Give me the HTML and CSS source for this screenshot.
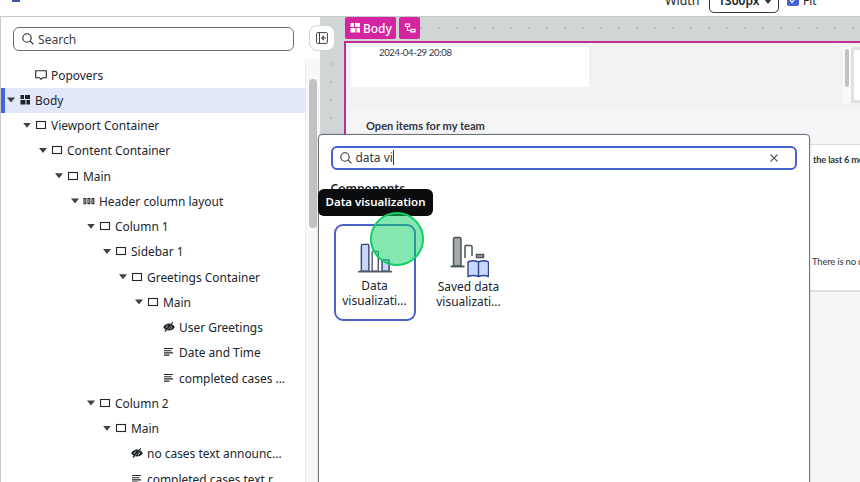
FILE: index.html
```html
<!DOCTYPE html>
<html lang="en">
<head>
<meta charset="utf-8">
<title>UI Builder</title>
<link rel="stylesheet" href="styles.css">
</head>
<body>
<svg class="defs" width="0" height="0">
  <symbol id="box" viewBox="0 0 12 10"><rect x="1.5" y="1.5" width="9" height="7" fill="none" stroke="currentColor" stroke-width="1.1"/></symbol>
  <symbol id="body" viewBox="0 0 12 10"><path d="M1.500 0H5v4H1.500zM6 0h5v4H6zM1.500 5h5v4.500h-5zM7.500 5H11v4.500H7.500z" fill="currentColor"/></symbol>
  <symbol id="pop" viewBox="0 0 12 10"><path d="M.7.7h10.600v7H7.700L6 9.200 4.300 7.700H.7z" fill="none" stroke="currentColor" stroke-width="1.1"/></symbol>
  <symbol id="cols" viewBox="0 0 12 10"><path d="M1 2.500h1.800v5.200H1zM5 2.500h1.800v5.200H5zM9 2.500h1.800v5.200H9z" fill="none" stroke="currentColor" stroke-width="1.100"/></symbol>
  <symbol id="text" viewBox="0 0 12 10"><path d="M1 1.500h9M1 3.700h7.500M1 5.900h9M1 8.100h5.500" stroke="currentColor" stroke-width="1.100"/></symbol>
  <symbol id="hid" viewBox="0 0 12 10"><path d="M.2 5.200Q2.500 1.500 6 1.500T11.800 5.200Q9.500 8.500 6 8.500T.2 5.200z" fill="currentColor"/><path d="M3.200 8.800 9.500 1.200" stroke="#fff" stroke-width="1"/><path d="M2 9.500 9.800.4" stroke="currentColor" stroke-width="1.200"/><path d="M3.500 6q-.3-2 1.500-2.500M8.500 4.500q.2 2-1.500 2.500" stroke="#fff" stroke-width=".6" fill="none"/></symbol>
  <symbol id="glass" viewBox="0 0 12 12"><circle cx="5" cy="5" r="4.200" fill="none" stroke="currentColor" stroke-width="1.100"/><path d="m8.200 8.200 3.200 3.200" stroke="currentColor" stroke-width="1.200"/></symbol>
</svg>
<div class="app">
  <header class="top">
    <span class="dash"></span>
    <span class="wlabel">Width</span>
    <span class="select">1300px<svg width="8" height="5" viewBox="0 0 8 5"><path d="M0 0h8L4 5z" fill="#303741"/></svg></span>
    <span class="check"><svg width="12" height="12" viewBox="0 0 12 12"><path d="m3 6 2 2.500 4-5" fill="none" stroke="#fff" stroke-width="1.200"/></svg></span>
    <span class="fit">Fit</span>
  </header>
  <main class="work">
    <aside class="side">
      <div class="search"><svg width="12" height="12"><use href="#glass"/></svg><span>Search</span></div>
      <div class="treewrap">
        <ul class="tree">
          <li class="row pop"><svg class="ic"><use href="#pop"/></svg><span>Popovers</span></li>
          <li class="row sel l0"><i class="caret"></i><svg class="ic"><use href="#body"/></svg><span>Body</span></li>
          <li class="row l1"><i class="caret"></i><svg class="ic"><use href="#box"/></svg><span>Viewport Container</span></li>
          <li class="row l2"><i class="caret"></i><svg class="ic"><use href="#box"/></svg><span>Content Container</span></li>
          <li class="row l3"><i class="caret"></i><svg class="ic"><use href="#box"/></svg><span>Main</span></li>
          <li class="row l4"><i class="caret"></i><svg class="ic"><use href="#cols"/></svg><span>Header column layout</span></li>
          <li class="row l5"><i class="caret"></i><svg class="ic"><use href="#box"/></svg><span>Column 1</span></li>
          <li class="row l6"><i class="caret"></i><svg class="ic"><use href="#box"/></svg><span>Sidebar 1</span></li>
          <li class="row l7"><i class="caret"></i><svg class="ic"><use href="#box"/></svg><span>Greetings Container</span></li>
          <li class="row l8"><i class="caret"></i><svg class="ic"><use href="#box"/></svg><span>Main</span></li>
          <li class="row l9"><i class="caret none"></i><svg class="ic"><use href="#hid"/></svg><span>User Greetings</span></li>
          <li class="row l9"><i class="caret none"></i><svg class="ic"><use href="#text"/></svg><span>Date and Time</span></li>
          <li class="row l9"><i class="caret none"></i><svg class="ic"><use href="#text"/></svg><span>completed cases ...</span></li>
          <li class="row l5"><i class="caret"></i><svg class="ic"><use href="#box"/></svg><span>Column 2</span></li>
          <li class="row l6"><i class="caret"></i><svg class="ic"><use href="#box"/></svg><span>Main</span></li>
          <li class="row l7"><i class="caret none"></i><svg class="ic"><use href="#hid"/></svg><span>no cases text announc...</span></li>
          <li class="row l7"><i class="caret none"></i><svg class="ic"><use href="#text"/></svg><span>completed cases text r...</span></li>
        </ul>
        <div class="track"><div class="thumb"></div></div>
      </div>
    </aside>
    <section class="canvas">
      <div class="tags">
        <span class="tag"><svg width="12" height="10"><use href="#body"/></svg>Body</span>
        <span class="tag small"><svg width="12" height="10" viewBox="0 0 12 10"><path d="M1.500 1h4v2.500h-4zM7 6.300h4v2.500H7zM3.500 3.500v4H7" fill="none" stroke="#fff" stroke-width="1.200"/></svg></span>
      </div>
      <div class="frame">
        <div class="band">
          <div class="date">2024-04-29 20:08</div>
          <div class="mini"><i></i></div>
          <div class="edge"></div>
        </div>
        <h2 class="open">Open items for my team</h2>
        <div class="card"><b>the last 6 months</b><span>There is no data</span></div>
      </div>
    </section>
  </main>
</div>
<div class="collapse"><svg width="12" height="12" viewBox="0 0 12 12"><rect x=".6" y=".6" width="10.800" height="10.800" rx="1" fill="none" stroke="#3c4248" stroke-width="1"/><path d="M3.500.6v10.800" stroke="#3c4248"/><path d="M10 6H6M7.800 4 5.800 6l2 2" fill="none" stroke="#3c4248" stroke-width="1.100"/></svg></div>
<div class="picker">
  <div class="query"><svg width="12" height="12"><use href="#glass"/></svg><span class="typed">data vi</span><svg class="x" width="8" height="8" viewBox="0 0 8 8"><path d="m.5.5 7 7m0-7-7 7" stroke="#515c66" stroke-width="1.100"/></svg></div>
  <h3>Components</h3>
  <div class="tiles">
    <div class="tile on">
      <svg width="36" height="32" viewBox="0 0 38 34"><g stroke-width="1.500"><path d="M4.500 31V4q0-1.500 1.500-1.500h5q1.500 0 1.500 1.500v27z" fill="#c9d5f8" stroke="#30437e"/><path d="M16 31V11q0-1 1-1h4.500q1 0 1 1v20z" fill="#fff" stroke="#515c66"/><path d="M26.500 31V20q0-1 1-1H33q1 0 1 1v11z" fill="#c9d5f8" stroke="#30437e"/></g><path d="M1 31.500h36" stroke="#515c66" stroke-width="1.700"/></svg>
      <span>Data<br>visualizati...</span>
    </div>
    <div class="tile">
      <svg width="40" height="42" viewBox="0 0 40 42"><g fill="none" stroke="#4b5459" stroke-width="1.500"><path d="M4.500 30V3q0-1.500 1.500-1.500h4.500q1.500 0 1.500 1.500v27z" fill="#a3abae"/><path d="M16 22V10.500q0-1 1-1h4.500q1.500 0 1.500 1v9.500"/><path d="M27.500 21.500v-3h7v3z" fill="#a3abae"/></g><path d="M1.500 30.500h14" stroke="#4b5459" stroke-width="1.800"/><path d="M19 26q5-2.500 10.500 0 5.500-2.500 10 0v14.500q-5-2-10 0-5.500-2-10.500 0zM29.500 26v14.500" fill="#c9d8ff" stroke="#30478f" stroke-width="1.400"/></svg>
      <span>Saved data<br>visualizati...</span>
    </div>
  </div>
</div>
<div class="tip">Data visualization</div>
<div class="click"></div>
</body>
</html>
```
FILE: styles.css
```css
* { box-sizing: border-box; }
body { margin: 0; width: 860px; height: 482px; overflow: hidden; position: relative; background: #fff; font-family: "Noto Sans", sans-serif; font-size: 11.95px; color: #20252c; }
.defs { position: absolute; }
svg { display: block; flex: none; }
.app { height: 482px; display: flex; flex-direction: column; }
.top { height: 16px; flex: none; overflow: hidden; display: flex; align-items: flex-end; }
.top > * { flex: none; }
.dash { width: 8px; height: 2px; margin-left: 12px; align-self: flex-start; background: #4051a0; }
.wlabel { width: 44px; margin-left: 645px; line-height: 18px; margin-bottom: 6px; font-size: 12.4px; }
.select { width: 70px; height: 28px; margin-bottom: 3px; border: 1px solid #303741; border-radius: 5px; display: flex; align-items: center; gap: 5px; padding: 2px 0 0 8px; font-weight: 600; font-size: 12px; }
.select svg { margin-top: 3px; }
.check { width: 12px; height: 12px; margin: 0 4px 10px 8px; background: #4463d5; border-radius: 2px; }
.fit { line-height: 18px; margin-bottom: 6px; font-size: 12px; }
.work { flex: 1; min-height: 0; display: flex; border-top: 1px solid #c5cacb; }
.side { width: 320px; flex: none; border-left: 1px solid #c5cacb; display: flex; flex-direction: column; }
.search { width: 281px; height: 24px; flex: none; margin: 10px 0 8px 12px; border: 1px solid #697176; border-radius: 6px; display: flex; align-items: center; gap: 4px; padding-left: 8px; color: #3c4248; }
.search svg { color: #20252c; }
.search { font-size: 12.1px; }
.treewrap { flex: 1; min-height: 0; display: flex; overflow: hidden; }
.tree { list-style: none; margin: 0; padding: 3.6px 0 0; width: 304px; }
.row { height: 25.25px; display: flex; align-items: center; white-space: nowrap; }
.ic { width: 12px; height: 10px; margin-right: 4px; }
.row .ic { margin-top: -1px; }
.pop { padding-left: 34px; }
.row.sel { background: #e2e7fa; border-left: 4px solid #4a63d6; }
.caret { width: 8px; height: 5px; margin: -1px 4px 0 0; background: #3c4348; clip-path: polygon(0 0, 100% 0, 50% 100%); }
.caret.none { visibility: hidden; }
.l0 { padding-left: 2px; }
.l1 { padding-left: 22px; }
.l2 { padding-left: 38px; }
.l3 { padding-left: 54px; }
.l4 { padding-left: 70px; }
.l5 { padding-left: 86px; }
.l6 { padding-left: 102px; }
.l7 { padding-left: 118px; }
.l8 { padding-left: 134px; }
.l9 { padding-left: 150px; }
.track { width: 15px; background: #f8f8f8; border-left: 1px solid #ececec; padding: 20px 3px 0; }
.thumb { height: 149px; border-radius: 4px; background: #c2c2c2; }
.canvas { flex: 1; min-width: 0; padding-left: 24px; display: flex; flex-direction: column; background: radial-gradient(circle, #bac0c2 1.2px, transparent 1.6px) 2px 2px / 18px 18px #d0d5d6; }
.tags { height: 24px; flex: none; display: flex; gap: 3px; padding-left: 1px; }
.tag { width: 51px; height: 22px; border-radius: 2px; background: #d5249f; color: #fff; display: flex; align-items: center; gap: 2px; padding-left: 4px; font-weight: 500; }
.tag.small { width: 21px; padding-left: 5px; }
.frame { flex: 1; min-height: 0; border: solid #c52b96; border-width: 2px 0 0 2px; background: #f5f5f8; }
.band { height: 67px; background: #f1f2f4; padding: 4px 0 0 5px; display: flex; }
.date { width: 238px; height: 40px; background: #fff; padding-left: 28px; font: 9.5px/12px Lato, sans-serif; letter-spacing: -.34px; color: #303741; flex: none; }
.mini { width: 8px; height: 57px; margin-left: 254px; background: #fafafa; padding: 2px 2px 0; flex: none; }
.mini i { display: block; height: 38px; border-radius: 2px; background: #c2c2c2; }
.edge { width: 20px; height: 56px; border: 3px solid #e0e1e5; background: #fff; flex: none; }
.open { margin: 8px 0 0 20px; height: 26px; font: 700 11.1px/16px Lato, sans-serif; color: #303741; }
.card { height: 148px; background: #fff; border: solid #dddee2; border-width: 1px 0 2px; padding: 7px 0 0 466px; display: flex; flex-direction: column; gap: 87px; white-space: nowrap; font: 9.5px/15px Lato, sans-serif; color: #303741; overflow: hidden; }
.card b { padding-left: 1px; font-size: 9.3px; letter-spacing: -.2px; }
.card span { letter-spacing: -.2px; }
.collapse { position: absolute; left: 309px; top: 25px; width: 26px; height: 26px; border: 1px solid #cfd4d5; border-radius: 8px; background: #fff; display: grid; place-items: center; }
.picker { position: absolute; left: 318px; top: 134px; width: 492px; height: 360px; border: 1px solid #697176; border-radius: 4px; background: #fff; padding: 11px 11.5px; box-shadow: 0 0 3px #0002; }
.query { height: 24px; width: 466px; border: 2px solid #4560cf; border-radius: 6px; display: flex; align-items: center; padding: 0 17px 0 7px; gap: 4px; color: #303741; }
.typed { border-right: 1px solid #303741; line-height: 15px; margin-top: -1px; }
.x { margin-left: auto; margin-top: -1px; }
.picker h3 { margin: 10px 0 0; font-size: 12px; line-height: 17px; font-weight: 600; }
.tiles { display: flex; gap: 12px; margin: 27px 0 0 3px; }
.tile { width: 82px; height: 97px; display: flex; flex-direction: column; align-items: center; text-align: center; line-height: 15px; border: 2px solid transparent; border-radius: 9px; white-space: nowrap; }
.tile span { margin-top: auto; margin-bottom: 11px; }
.tile svg { margin-top: 16px; }
.tile:not(.on) svg { margin-top: 10px; }
.tile:not(.on) span { margin-top: 1px; }
.tile.on { border-color: #4c62c9; }
.tip { position: absolute; left: 318px; top: 189px; width: 115px; height: 27px; border-radius: 6px; background: #0b0c0e; color: #fff; font-weight: 600; font-size: 11.5px; line-height: 26px; text-align: center; white-space: nowrap; }
.click { position: absolute; left: 370px; top: 212px; width: 54px; height: 54px; border: 2px solid #0bd062; border-radius: 50%; background: #0bd06280; }
```
